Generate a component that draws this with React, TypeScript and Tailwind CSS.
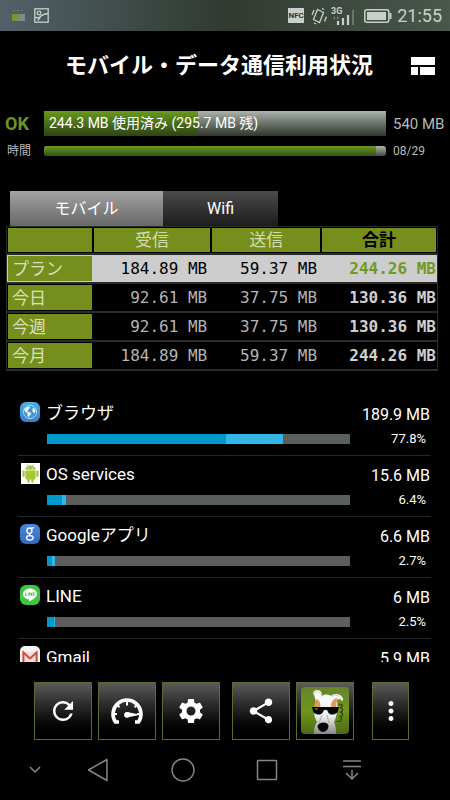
import { MdMoreVert, MdRefresh, MdSettings, MdShare } from 'react-icons/md'

const usageRows = [
  { label: 'プラン', received: '184.89 MB', sent: '59.37 MB', total: '244.26 MB', active: true },
  { label: '今日', received: '92.61 MB', sent: '37.75 MB', total: '130.36 MB', active: false },
  { label: '今週', received: '92.61 MB', sent: '37.75 MB', total: '130.36 MB', active: false },
  { label: '今月', received: '184.89 MB', sent: '59.37 MB', total: '244.26 MB', active: false },
]

const apps = [
  { name: 'ブラウザ', amount: '189.9 MB', percent: 77.8, foreground: 59, icon: <BrowserIcon /> },
  { name: 'OS services', amount: '15.6 MB', percent: 6.4, foreground: 5, icon: <AndroidIcon /> },
  { name: 'Googleアプリ', amount: '6.6 MB', percent: 2.7, foreground: 1.8, icon: <GoogleIcon /> },
  { name: 'LINE', amount: '6 MB', percent: 2.5, foreground: 2.2, icon: <LineIcon /> },
  { name: 'Gmail', amount: '5.9 MB', percent: 2.4, foreground: 1, icon: <GmailIcon /> },
]

function BrowserIcon() {
  return (
    <svg viewBox="0 0 20 20" className="size-5" aria-hidden="true">
      <defs>
        <linearGradient id="browser" x1="0" y1="0" x2="0" y2="1">
          <stop offset="0" stopColor="#4db3e6" />
          <stop offset="1" stopColor="#3a7cc8" />
        </linearGradient>
      </defs>
      <rect width="20" height="20" rx="6" fill="url(#browser)" />
      <circle cx="10" cy="10" r="6.6" fill="#3f97d8" stroke="#a9d8f3" strokeWidth="1" />
      <path d="M5 6.5 8 4.4l2.2.5-.6 1.6-1.4.8.2 1.3-1.6.4 1.2 1 2.6.6.6 1.6-1.8 1.6-.6 1.8-1.4-2.4.2-2L5 9.4 4.4 8zM12 5.4l2.4 1 1.3 2.4-.8 2.2-1.6-.5-1.2-2 .9-1.3z" fill="#f4fbff" />
    </svg>
  )
}

function AndroidIcon() {
  return (
    <svg viewBox="0 0 20 21" className="h-[21px] w-5" aria-hidden="true">
      <rect x="1" width="19" height="21" fill="#fff" />
      <path d="M7.2 1.2l1.3 2M13.8 1.2l-1.3 2" stroke="#a4c639" strokeWidth=".7" />
      <path d="M5.4 6.8c0-2.6 2.2-4.4 5.1-4.4s5.1 1.8 5.1 4.4z" fill="#a4c639" />
      <path d="M5.4 7.5h10.2v7.6a1.3 1.3 0 0 1-1.3 1.3H6.7a1.3 1.3 0 0 1-1.3-1.3z" fill="#a4c639" />
      <rect x="2.4" y="7.4" width="2.3" height="6.8" rx="1.15" fill="#a4c639" />
      <rect x="16.3" y="7.4" width="2.3" height="6.8" rx="1.15" fill="#a4c639" />
      <rect x="7.4" y="14" width="2.3" height="6" rx="1.15" fill="#a4c639" />
      <rect x="11.3" y="14" width="2.3" height="6" rx="1.15" fill="#a4c639" />
      <circle cx="8.3" cy="4.9" r=".5" fill="#fff" />
      <circle cx="12.7" cy="4.9" r=".5" fill="#fff" />
    </svg>
  )
}

function GoogleIcon() {
  return (
    <svg viewBox="0 0 20 20" className="size-5" aria-hidden="true">
      <defs>
        <linearGradient id="google" x1="0" y1="0" x2="0" y2="1">
          <stop offset="0" stopColor="#4a86d8" />
          <stop offset="1" stopColor="#2f6cc0" />
        </linearGradient>
      </defs>
      <rect width="20" height="20" rx="6" fill="url(#google)" />
      <g fill="none" stroke="#eef4fd" strokeWidth="1.5" strokeLinecap="round">
        <ellipse cx="9.4" cy="6.7" rx="2.5" ry="2.7" />
        <path d="M11 4.3l2.6-.6M10.6 9.2c-1.6.9-1.4 1.7.2 2.5" />
        <ellipse cx="9.8" cy="13.7" rx="3.3" ry="2.3" />
      </g>
    </svg>
  )
}

function LineIcon() {
  return (
    <svg viewBox="0 0 20 20" className="size-5" aria-hidden="true">
      <rect width="20" height="20" rx="6" fill="#3fc641" />
      <path d="M10 3.4c-3.9 0-7 2.5-7 5.7 0 2.8 2.4 5 5.8 5.5.6.2.4 1 .3 2 2.8-1.2 7.9-4.4 7.9-7.5 0-3.2-3.1-5.7-7-5.7z" fill="#fff" />
      <path d="M5.6 7.6v3h1.5M8.3 7.6v3M9.7 10.6v-3l1.9 3v-3M14.6 7.6h-1.5v3h1.5M13.1 9.1h1.3" fill="none" stroke="#3fc641" strokeWidth=".9" />
    </svg>
  )
}

function GmailIcon() {
  return (
    <svg viewBox="0 0 20 20" className="size-5" aria-hidden="true">
      <rect width="20" height="20" rx="5" fill="#f7f4f3" />
      <path d="M3 6h14v10H3z" fill="#f3dedb" />
      <path d="M3.4 16V6.4l6.6 6 6.6-6V16" fill="none" stroke="#cf4a3e" strokeWidth="2" />
    </svg>
  )
}

function GaugeIcon() {
  return (
    <svg viewBox="0 0 34 28" className="h-7 w-[34px]" aria-hidden="true">
      <path d="M9 25H5.500A14 14 0 1 1 28.500 25H25" fill="none" stroke="#fff" strokeWidth="3.600" />
      <path d="M17 3v5.500M7.300 8l2.200 2.200M26.700 8l-2.200 2.200M3 17h4M27 17h4" stroke="#fff" strokeWidth="2" />
      <path d="M17 15l11 2.200v1L17 20.600z" fill="#fff" />
      <circle cx="17" cy="17.800" r="2.900" fill="#fff" />
    </svg>
  )
}

function DogIcon() {
  return (
    <svg viewBox="0 0 48 48" className="size-12" aria-hidden="true">
      <defs>
        <linearGradient id="grass" x1="0" y1="0" x2="0" y2="1">
          <stop offset="0" stopColor="#66852a" />
          <stop offset=".5" stopColor="#6f961e" />
          <stop offset="1" stopColor="#4c6b12" />
        </linearGradient>
        <linearGradient id="fur" x1="0" y1="0" x2="0" y2="1">
          <stop offset="0" stopColor="#fff" />
          <stop offset=".6" stopColor="#eee" />
          <stop offset="1" stopColor="#888" />
        </linearGradient>
      </defs>
      <rect width="48" height="47" rx="4" fill="url(#grass)" />
      <path d="M38 18c4-3 4 2 1 3 4 0 3 4 0 4 4 1 3 5 0 4 3 2 1 7-3 5" fill="none" stroke="#2f450b" strokeWidth="1.200" />
      <path
        d="M13 47c0-6 1-9 3-12-3-5-4-12-1-20-1-3-1-5-2-7-2-2 0-5 3-5 4 0 5 3 5 6 2-2 7-2 9 0 2-2 6-3 9-1 3 2 4 5 2 6-1-2-4-2-5-1 1 8 0 16-3 22 2 4 2 8 2 12z"
        fill="url(#fur)"
      />
      <path d="M16 12c3 2 4 5 3 9h-5c-1-4 0-7 2-9zM30 20c0-6 3-9 7-9-2 3-1 6-2 10z" fill="#dd9a58" />
      <path d="M13 6c2-3 7-1 8 4M31 10c3-3 7-2 9 2" fill="none" stroke="#cfc8bd" strokeWidth="1" />
      <path d="M11 20h27l-1 4c-1 4-8 5-10 1l-1-2h-3l-1 2c-2 4-9 3-10-1z" fill="#050505" />
      <path d="M14 22h3" stroke="#999" strokeWidth="1" />
      <path d="M21 28l-3 8M26 28l2 8" stroke="#aaa" strokeWidth="1" />
      <path d="M16.500 39c1-4 10-5 11 0 0 3-3 6-5.500 6s-5.500-3-5.500-6z" fill="#050505" />
    </svg>
  )
}

function StatusBar() {
  return (
    <div className="flex h-[31px] shrink-0 items-center justify-between bg-linear-to-r from-[#526269] via-[#313a31] to-[#4a574d] pr-2 pl-3 text-[#c9cfca]">
      <div className="flex items-center gap-[9px]">
        <svg viewBox="0 0 13 13" className="size-[13px]" aria-hidden="true">
          <path d="M1 1.500h2M5 1.500h2M9 1.500h2" stroke="#6f7c78" strokeWidth="1" />
          <path d="M0 5h13v7H0z" fill="#7e8b84" />
          <path d="M0 5h8l-4 7H0z" fill="#75962b" />
        </svg>
        <svg viewBox="0 0 15 15" className="size-[15px]" fill="none" stroke="currentColor" strokeWidth="1.300" aria-hidden="true">
          <rect x=".8" y=".8" width="13.400" height="13.400" />
          <circle cx="5" cy="5" r="1.800" />
          <path d="M4 12.500C5 9 8 6 14 5.500M1 10c2-1 4 0 5 1" />
        </svg>
      </div>
      <div className="flex items-center">
        <span className="mr-[7px] flex h-[15px] w-4 items-center justify-center bg-[#c9cfca] text-[8px] font-bold text-[#2f382f]">NFC</span>
        <svg viewBox="0 0 16 18" className="mr-1 h-[18px] w-4" fill="none" stroke="currentColor" strokeWidth="1.300" aria-hidden="true">
          <path d="M6.500 2.500l6 3-4 10-6-3z" />
          <path d="M3 3L1 8M5 17l-2-1M13.500 14.500l2-5M11 1.500l2 1" />
        </svg>
        <svg viewBox="0 0 24 20" className="mr-[9px] h-5 w-6" aria-hidden="true">
          <text x="0" y="8" fontSize="9" fontWeight="700" fontFamily="Roboto, sans-serif" fill="currentColor">3G</text>
          <path d="M7 19v-4M12 19v-7M17 19V9" stroke="currentColor" strokeWidth="2.200" />
          <path d="M22 19V4" stroke="#6b746c" strokeWidth="2" />
          <path d="M2 12l2-2v4zM8 12l-2-2v4z" fill="#78817a" />
        </svg>
        <svg viewBox="0 0 28 14" className="mr-[5px] h-[14px] w-7" aria-hidden="true">
          <rect x=".8" y=".8" width="24" height="12.400" rx="2" fill="none" stroke="currentColor" strokeWidth="1.500" />
          <path d="M3 3h19v8H3z" fill="currentColor" />
          <path d="M26.500 4v6" stroke="currentColor" strokeWidth="2" />
        </svg>
        <time className="text-lg leading-5">21:55</time>
      </div>
    </div>
  )
}

function PlanSummary() {
  return (
    <section className="grid shrink-0 grid-cols-[44px_1fr_64px] items-center gap-y-[10px] pt-[11px]">
      <span className="pl-[5px] text-lg leading-5 font-bold text-[#6b9420]">OK</span>
      <div className="relative h-[25px] bg-linear-to-b from-[#adb3ad] to-[#30382f]">
        <div className="h-full w-[45%] bg-linear-to-b from-[#6a9a1d] to-[#2c4415]" />
        <span className="absolute inset-0 pl-[5px] text-sm leading-[25px] whitespace-nowrap text-white">244.3 MB 使用済み (295.7 MB 残)</span>
      </div>
      <span className="pl-[7px] text-[15px] leading-5 text-[#b9b9b9]">540 MB</span>
      <span className="pl-[7px] text-xs leading-[10px] text-[#b9b9b9]">時間</span>
      <div className="h-[10px] overflow-hidden rounded-[3px] bg-linear-to-b from-[#adb3ad] to-[#454b45]">
        <div className="h-full w-[97%] bg-linear-to-b from-[#6a9a1d] to-[#34501a]" />
      </div>
      <span className="pl-[7px] text-xs leading-[10px] text-[#b9b9b9]">08/29</span>
    </section>
  )
}

function UsageTable() {
  return (
    <div className="mr-3 ml-[6px]">
      <table className="w-full table-fixed border-collapse border border-[#2b2b2b] text-[17px] leading-6">
        <colgroup>
          <col className="w-[20%]" />
          <col className="w-[27.5%]" />
          <col className="w-[25.5%]" />
          <col className="w-[27%]" />
        </colgroup>
        <thead>
          <tr className="border-b-2 border-[#2b2b2b]">
            <td className="p-px"><div className="h-6 bg-[#768f1c]" /></td>
            <th scope="col" className="p-px font-normal"><div className="h-6 bg-[#768f1c] text-[#d3dcae]">受信</div></th>
            <th scope="col" className="p-px font-normal"><div className="h-6 bg-[#768f1c] text-[#d3dcae]">送信</div></th>
            <th scope="col" className="p-px font-bold"><div className="h-6 bg-[#768f1c] text-black">合計</div></th>
          </tr>
        </thead>
        <tbody>
          {usageRows.map((row) => (
            <tr key={row.label} className={row.active ? 'border-b-2 border-[#2b2b2b] bg-[#cdcdcd] text-black' : 'border-b-2 border-[#2b2b2b] text-[#b4b4b4]'}>
              <th scope="row" className="p-px text-left font-normal">
                <div className="h-[25px] bg-[#768f1c] pl-1 leading-[26px] text-[#d9e0bc]">{row.label}</div>
              </th>
              <td className="pr-1 text-right font-['DejaVu_Sans_Mono',monospace] text-base leading-6">{row.received}</td>
              <td className="pr-1 text-right font-['DejaVu_Sans_Mono',monospace] text-base leading-6">{row.sent}</td>
              <td className={row.active ? "pr-px text-right font-['DejaVu_Sans_Mono',monospace] text-base leading-6 font-bold text-[#6f9a26]" : "pr-px text-right font-['DejaVu_Sans_Mono',monospace] text-base leading-6 font-bold text-[#cfcfcf]"}>{row.total}</td>
            </tr>
          ))}
        </tbody>
      </table>
    </div>
  )
}

function AppList() {
  return (
    <ul className="mt-6 mr-[19px] ml-[18px] min-h-0 flex-1 overflow-hidden">
      {apps.map((app) => (
        <li key={app.name} className="grid h-[61px] grid-cols-[28px_1fr_81px] grid-rows-[36px_1fr] border-b border-[#262626] text-white">
          <div className="pt-[7px] pl-[2px]">{app.icon}</div>
          <h2 className="pt-[6px] text-[17px] leading-6">{app.name}</h2>
          <span className="pt-2 pr-px text-right text-base leading-6">{app.amount}</span>
          <div
            role="progressbar"
            aria-label={app.name}
            aria-valuenow={app.percent}
            className="col-start-2 mt-[3px] ml-px h-[10px] bg-[#5b5f5b]"
          >
            <div className="h-full bg-[#33b5e5]" style={{ width: `${app.percent}%` }}>
              <div className="h-full bg-[#0099cc]" style={{ width: `${(app.foreground / app.percent) * 100}%` }} />
            </div>
          </div>
          <span className="pr-[5px] text-right text-[13px] leading-4">{app.percent}%</span>
        </li>
      ))}
    </ul>
  )
}

const toolButton = 'flex h-[58px] items-center justify-center border border-[#5a6b32] bg-linear-to-b from-[#5c5c5c] to-black text-white'

function Toolbar() {
  return (
    <div className="mt-5 flex shrink-0 justify-center gap-3 pr-[7px]">
      <div className="flex gap-[6px]">
        <button type="button" aria-label="更新" className={`${toolButton} w-[58px]`}><MdRefresh size={30} /></button>
        <button type="button" aria-label="速度" className={`${toolButton} w-[58px]`}><GaugeIcon /></button>
        <button type="button" aria-label="設定" className={`${toolButton} w-[58px]`}><MdSettings size={30} /></button>
      </div>
      <div className="flex gap-[6px]">
        <button type="button" aria-label="共有" className={`${toolButton} w-[58px]`}><MdShare size={30} /></button>
        <button type="button" aria-label="ウォッチドッグ" className={`${toolButton} w-[58px]`}><DogIcon /></button>
      </div>
      <button type="button" aria-label="メニュー" className={`${toolButton} ml-[6px] w-[37px]`}><MdMoreVert size={30} /></button>
    </div>
  )
}

function NavBar() {
  return (
    <nav className="grid h-[60px] shrink-0 grid-cols-[1fr_2fr_2fr_2fr_2fr] pr-14 pl-[14px] text-[#868686]">
      <button type="button" aria-label="隠す" className="flex items-center justify-center">
        <svg viewBox="0 0 12 8" className="h-2 w-3" fill="none" stroke="currentColor" strokeWidth="1.500"><path d="M1 1l5 5 5-5" /></svg>
      </button>
      <button type="button" aria-label="戻る" className="flex items-center justify-center">
        <svg viewBox="0 0 22 24" className="h-6 w-[22px]" fill="none" stroke="currentColor" strokeWidth="1.500" strokeLinejoin="round"><path d="M20 1.500v21L1.500 12z" /></svg>
      </button>
      <button type="button" aria-label="ホーム" className="flex items-center justify-center">
        <svg viewBox="0 0 24 24" className="size-6" fill="none" stroke="currentColor" strokeWidth="1.400"><circle cx="12" cy="12" r="11" /></svg>
      </button>
      <button type="button" aria-label="履歴" className="flex items-center justify-center">
        <svg viewBox="0 0 22 22" className="size-[22px]" fill="none" stroke="currentColor" strokeWidth="1.500"><rect x="1.500" y="1.500" width="19" height="19" rx=".5" /></svg>
      </button>
      <button type="button" aria-label="通知" className="flex items-center justify-center">
        <svg viewBox="0 0 18 22" className="h-[22px] w-[18px]" fill="none" stroke="currentColor" strokeWidth="1.500"><path d="M0 2h18M0 7.500h18M9 11v9M3 14l6 6 6-6" /></svg>
      </button>
    </nav>
  )
}

export default function App() {
  return (
    <div className="flex h-screen flex-col overflow-hidden bg-black font-['Roboto','Noto_Sans_CJK_JP',sans-serif]">
      <StatusBar />
      <header className="grid h-[69px] shrink-0 grid-cols-[1fr_auto_1fr] items-center pr-[15px] pl-[3px]">
        <h1 className="col-start-2 text-[22px] leading-8 font-bold whitespace-nowrap text-white">モバイル・データ通信利用状況</h1>
        <button type="button" aria-label="表示切替" className="justify-self-end">
          <svg viewBox="0 0 24 18" className="h-[18px] w-6" fill="#fff">
            <path d="M0 0h24v8H0zM0 10h7v8H0zM9 10h15v8H9z" />
          </svg>
        </button>
      </header>
      <PlanSummary />
      <div role="tablist" className="mt-[35px] mr-[172px] ml-[10px] flex h-[35px] shrink-0 text-base text-white">
        <button type="button" role="tab" aria-selected="true" className="flex-[4] bg-linear-to-b from-[#a3a3a3] to-[#686868]">モバイル</button>
        <button type="button" role="tab" aria-selected="false" className="flex-[3] bg-linear-to-b from-[#4b4b4b] to-[#1d1d1d]">Wifi</button>
      </div>
      <UsageTable />
      <AppList />
      <Toolbar />
      <NavBar />
    </div>
  )
}
